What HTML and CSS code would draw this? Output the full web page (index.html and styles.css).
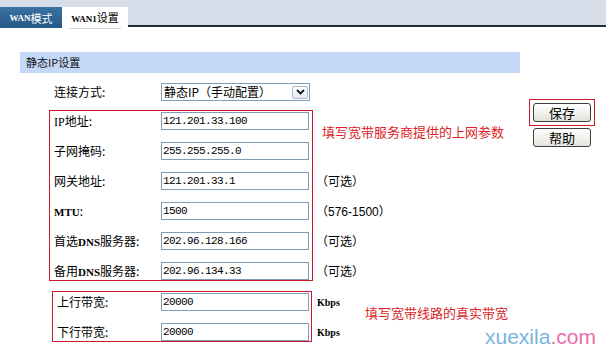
FILE: index.html
```html
<!DOCTYPE html>
<html>
<head>
<meta charset="utf-8">
<title>WAN1设置</title>
<link rel="stylesheet" href="styles.css">
</head>
<body>

<div class="tabs">
	<div class="tab tab-off"><span class="en">WAN</span>模式</div>
	<div class="tab tab-on"><span class="tab-label"><span class="en">WAN1</span>设置</span></div>
	<div class="tab-rest"></div>
</div>

<div class="page">
	<div class="section-title">静态IP设置</div>

	<div class="main">
		<div class="fields">
			<div class="row">
				<span class="label">连接方式:</span>
				<div class="select">
					<span class="select-text">静态IP（手动配置）</span>
					<span class="select-arrow">
						<svg width="9" height="6" viewBox="0 0 9 6"><path d="M1 1 L4.5 4.5 L8 1" fill="none" stroke="#1a1a1a" stroke-width="1.8"/></svg>
					</span>
				</div>
			</div>

			<!-- isp params -->
			<div class="group group-isp">
				<div class="row">
					<span class="label"><span class="lat">IP</span>地址:</span>
					<input class="input" type="text" value="121.201.33.100">
					<span class="mark mark-isp">填写宽带服务商提供的上网参数</span>
				</div>
				<div class="row">
					<span class="label">子网掩码:</span>
					<input class="input" type="text" value="255.255.255.0">
				</div>
				<div class="row">
					<span class="label">网关地址:</span>
					<input class="input" type="text" value="121.201.33.1">
					<span class="note">（可选）</span>
				</div>
				<div class="row">
					<span class="label"><span class="en">MTU</span>:</span>
					<input class="input" type="text" value="1500">
					<span class="note">（<span class="num">576-1500</span>）</span>
				</div>
				<div class="row">
					<span class="label">首选<span class="en">DNS</span>服务器:</span>
					<input class="input" type="text" value="202.96.128.166">
					<span class="note">（可选）</span>
				</div>
				<div class="row">
					<span class="label">备用<span class="en">DNS</span>服务器:</span>
					<input class="input" type="text" value="202.96.134.33">
					<span class="note">（可选）</span>
				</div>
			</div>

			<!-- bandwidth -->
			<div class="group group-bw">
				<div class="row">
					<span class="label">上行带宽:</span>
					<input class="input" type="text" value="20000">
					<span class="unit">Kbps</span>
					<span class="mark mark-bw">填写宽带线路的真实带宽</span>
				</div>
				<div class="row">
					<span class="label">下行带宽:</span>
					<input class="input" type="text" value="20000">
					<span class="unit">Kbps</span>
				</div>
			</div>
		</div>

		<div class="buttons">
			<span class="btn-mark"><button class="btn" type="button">保存</button></span>
			<button class="btn" type="button">帮助</button>
		</div>
	</div>

	<div class="watermark">xuexila<span>.com</span></div>
</div>

</body>
</html>
```

FILE: styles.css
```css
/* Reset style */
* {
	margin:0;
	padding:0;
	box-sizing:border-box;
}
body {
	background:#FFF;
	color:#000;
	font:12px/18px "Noto Sans CJK SC", sans-serif;
}

/* tabs */
.tabs {
	display:flex;
	align-items:flex-start;
	height:30px;
	padding-top:7px;
	background:linear-gradient(#d7dde8 27px, #fff 27px);
}
.tab {
	display:flex;
	align-items:center;
	justify-content:center;
	font-size:11px;
}
.tab .en {
	font:bold 9px "Liberation Serif", serif;
}
.tab-off {
	width:62px;
	height:21px;
	color:#FFF;
	background:linear-gradient(#3a72a2, #245886);
}
.tab-on {
	width:66px;
	height:23px;
	background:#FFF;
	align-items:flex-start;
	padding-top:2px;
}
.tab-label {
	padding:0 2px 2px;
	line-height:17px;
	border-bottom:1px solid #d6d6d6;
}
.tab-rest {
	flex:1;
	height:20px;
	border-bottom:2px solid #1e2f3f;
}

/* page */
.page {
	position:relative;
	height:320px;
	padding-top:22px;
}
.section-title {
	width:500px;
	height:21px;
	margin-left:20px;
	padding-left:6px;
	background:#c4d8f7;
	font-size:11px;
	line-height:21px;
	color:#111;
}
.main {
	display:flex;
	margin-top:10px;
	padding-left:54px;
}
.fields {
	width:475px;
}
.row {
	display:grid;
	grid-template-columns:107px 148px auto auto;
	grid-template-rows:18px;
	align-items:center;
	white-space:nowrap;
}
.label .en {
	font:bold 11px "Liberation Serif", serif;
}
.label .lat {
	font:12px "Liberation Serif", serif;
}
.input {
	width:148px;
	height:18px;
	border:1px solid #7f9db9;
	padding-left:1px;
	font:11px "Liberation Mono", monospace;
	letter-spacing:-0.6px;
	color:#000;
	outline:none;
}
.select {
	display:flex;
	align-items:center;
	justify-content:space-between;
	width:149px;
	height:18px;
	border:1px solid #7f9db9;
	padding:0 1px 0 2px;
}
.select-text {
	font-size:12px;
	line-height:16px;
}
.select-arrow {
	display:flex;
	align-items:center;
	justify-content:center;
	width:16px;
	height:13px;
	border:1px solid #a9bbd3;
	border-radius:2px;
	background:linear-gradient(#fff, #e3e9f2);
}
.note {
	margin-left:7px;
}
.note .num {
	font:12px "Liberation Sans", sans-serif;
}
.unit {
	width:46px;
	padding-left:8px;
	font:bold 10px "Liberation Serif", serif;
}

/* red marks */
.group {
	border:1px solid #cc1a2a;
}
.group-isp {
	width:264px;
	margin:9px 0 0 -5px;
	padding:1px 0 0 4px;
	display:flex;
	flex-direction:column;
	gap:12px;
}
.group-bw {
	width:260px;
	margin:10px 0 0 -2px;
	padding:1px 0 0 4px;
	display:flex;
	flex-direction:column;
	gap:12px;
}
.group-bw .row {
	grid-template-columns:104px 148px 46px auto;
}
.mark {
	align-self:start;
	font-size:13px;
	color:#dc1e28;
}
.mark-isp {
	margin:11px 0 0 13px;
}
.mark-bw {
	margin:11px 0 0 10px;
}

/* buttons */
.buttons {
	display:flex;
	flex-direction:column;
	align-items:flex-start;
	margin-top:16px;
}
.btn-mark {
	display:block;
	padding:3px 3px 3px 3px;
	border:1px solid #cc1a2a;
	margin-bottom:2px;
}
.buttons > .btn {
	margin-left:4px;
}
.btn {
	display:block;
	width:58px;
	height:19px;
	border:1px solid #3e3e3e;
	border-radius:3px;
	background:linear-gradient(#ffffff, #e4e4de);
	font:13px/17px "Noto Sans CJK SC", sans-serif;
	color:#000;
}

.watermark {
	position:absolute;
	left:485px;
	top:296px;
	font:21px/21px "Liberation Sans", sans-serif;
	color:#7cb4e0;
}
.watermark span {
	color:#ee6aa7;
}
```
